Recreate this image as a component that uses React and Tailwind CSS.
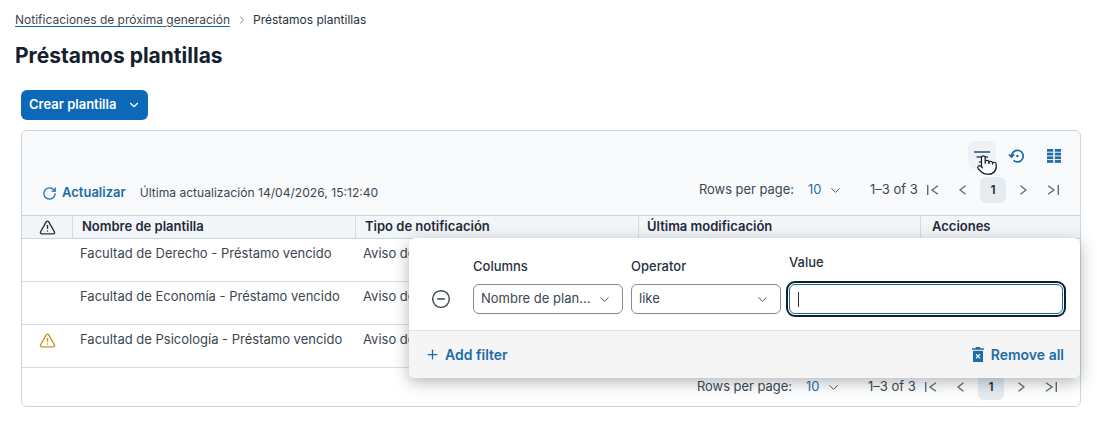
import React from "react";
import { ChevronDown, ChevronRight, RotateCw, TriangleAlert, CircleMinus, Plus, Pointer } from "lucide-react";

const rows = [
  { name: "Facultad de Derecho - Préstamo vencido", warn: false },
  { name: "Facultad de Economía - Préstamo vencido", warn: false },
  { name: "Facultad de Psicología - Préstamo vencido", warn: true },
];

const PagerIcon = ({ d, w = 8 }) => (
  <svg width={w} height="10" viewBox={`0 0 ${w} 10`} fill="none" stroke="#5f6b76" strokeWidth="1.4">
    <path d={d} />
  </svg>
);

const Pagination = () => (
  <div className="flex items-center text-[12.9px] text-[#3b4650]">
    <span className="w-[109px]">Rows per page:</span>
    <span className="text-[#1b6ca8] w-[20px]">10</span>
    <ChevronDown size={15} strokeWidth={1.6} className="text-[#4b5661]" />
    <span className="ml-[27px] w-[50px] whitespace-nowrap text-[13px]">1–3 of 3</span>
    <span className="w-[26px] flex justify-center"><PagerIcon w={12} d="M0.7 0V10M11 0.8L5 5L11 9.2" /></span>
    <span className="w-[34px] flex justify-center"><PagerIcon d="M6.5 0.8L1 5L6.5 9.2" /></span>
    <span className="w-[26px] h-[26px] rounded-md bg-[#e6ebf0] flex items-center justify-center font-semibold text-[12px] text-[#1f2a37]">1</span>
    <span className="w-[34px] flex justify-center"><PagerIcon d="M1.5 0.8L7 5L1.5 9.2" /></span>
    <span className="w-[26px] flex justify-center"><PagerIcon w={12} d="M11.3 0V10M1 0.8L7 5L1 9.2" /></span>
  </div>
);

const HeadCell = ({ className, children }) => (
  <div className={"flex items-center h-full border-r border-[#d5dde4] font-semibold text-[13px] text-[#1f2a37] " + className}>
    {children}
  </div>
);

const SelectBox = ({ className, label }) => (
  <div className={"h-[30px] border border-[#7f8b96] rounded-md flex items-center justify-between pl-[7px] pr-[10px] text-[13px] text-[#3b4650] " + className}>
    <span>{label}</span>
    <ChevronDown size={15} strokeWidth={1.6} className="text-[#4b5661]" />
  </div>
);

const ColumnsIcon = () => (
  <svg width="16" height="16" viewBox="0 0 16 16" fill="#1b6ca8">
    <rect x="1" y="1" width="6.2" height="2.7" />
    <rect x="8.8" y="1" width="6.2" height="2.7" />
    <rect x="1" y="4.7" width="6.2" height="2.7" />
    <rect x="8.8" y="4.7" width="6.2" height="2.7" />
    <rect x="1" y="8.4" width="6.2" height="2.7" />
    <rect x="8.8" y="8.4" width="6.2" height="2.7" />
    <rect x="1" y="12.1" width="6.2" height="2.7" />
    <rect x="8.8" y="12.1" width="6.2" height="2.7" />
  </svg>
);

const RestoreIcon = () => (
  <svg width="18" height="18" viewBox="0 0 18 18" fill="none" stroke="#1b6ca8" strokeWidth="1.7">
    <path d="M3.6 9a5.8 5.8 0 1 1 1.9 4.4" />
    <path d="M1 7.4 L3.6 10 L6.2 7.4" />
    <circle cx="9.4" cy="9" r="1.3" fill="#1b6ca8" stroke="none" />
  </svg>
);

const FilterIcon = () => (
  <svg width="18" height="18" viewBox="0 0 18 18" stroke="#27506f" strokeWidth="1.6" fill="none">
    <path d="M1 6H17M3.5 11H15M6 16H12.5" />
  </svg>
);

const TrashIcon = () => (
  <svg width="12" height="15" viewBox="0 0 12 15" fill="#1b6ca8">
    <path d="M4 0h4l.6 1.2H12v1.6H0V1.2h3.4z" />
    <path d="M1 3.8h10V15H1z" />
    <path d="M4 7.2l4 4M8 7.2l-4 4" stroke="#f5f5f5" strokeWidth="1.3" />
  </svg>
);

export default function App() {
  return (
    <div className="w-[1097px] h-[422px] overflow-hidden bg-white font-['Inter',sans-serif]">
      <div className="pl-[15px] pt-[12px]">
        <div className="flex items-center h-[16px] text-[12px] text-[#3b4650]">
          <span className="underline underline-offset-2 decoration-[#1b6ca8]">Notificaciones de próxima generación</span>
          <ChevronRight size={12} strokeWidth={1.8} className="ml-[6px] mr-[5px] text-[#6b7680]" />
          <span className="text-[#27323d]">Préstamos plantillas</span>
        </div>
        <h1 className="mt-[13px] h-[30px] leading-[30px] text-[21px] font-bold text-[#14202e]">Préstamos plantillas</h1>
      </div>

      <div className="pl-[21px] pt-[19px]">
        <div className="w-[127px] h-[30px] rounded-md bg-[#0b69b7] flex items-center pl-[8px] text-white text-[13px] font-semibold">
          <span>Crear plantilla</span>
          <ChevronDown size={14} strokeWidth={2} className="ml-[11px]" />
        </div>
      </div>

      <div className="relative ml-[21px] mt-[10px] w-[1060px] h-[277px] border border-[#ccd5dd] rounded-md">
        {/* toolbar */}
        <div className="h-[85px] bg-[#f8fafc] rounded-t-md border-b border-[#ccd5dd] relative">
          <div className="flex justify-end items-center h-[28px] absolute right-[18px] top-[10px]">
            <span className="relative w-[28px] h-[28px] rounded-md bg-[#eef2f6] flex items-center justify-center">
              <FilterIcon />
              <Pointer size={22} strokeWidth={1.3} fill="white" className="absolute left-[8px] top-[13px] text-[#111827]" />
            </span>
            <span className="ml-[10px] mt-[2px] w-[22px] flex justify-center"><RestoreIcon /></span>
            <span className="ml-[18px] mt-[2px]"><ColumnsIcon /></span>
          </div>
          <div className="absolute left-0 right-0 top-[46px] flex items-center justify-between pl-[20px] pr-[14px]">
            <div className="flex items-center mt-[6px]">
              <RotateCw size={15} strokeWidth={2} className="text-[#1b6ca8]" />
              <span className="ml-[5px] text-[13px] font-semibold text-[#1b6ca8]">Actualizar</span>
              <span className="ml-[14px] text-[12.1px] text-[#3b4650]">Última actualización 14/04/2026, 15:12:40</span>
            </div>
            <Pagination />
          </div>
        </div>

        {/* table head */}
        <div className="flex h-[23px] bg-[#f3f6f9] border-b border-[#ccd5dd]">
          <HeadCell className="w-[51px] justify-center"><TriangleAlert size={17} strokeWidth={2} className="text-[#27323d]" /></HeadCell>
          <HeadCell className="w-[283px] pl-[9px]">Nombre de plantilla</HeadCell>
          <HeadCell className="w-[283px] pl-[9px]">Tipo de notificación</HeadCell>
          <HeadCell className="w-[282px] pl-[8px]">Última modificación</HeadCell>
          <div className="flex items-center pl-[11px] font-semibold text-[13px] text-[#1f2a37]">Acciones</div>
        </div>

        {/* rows */}
        {rows.map((r) => (
          <div key={r.name} className="flex h-[43px] border-b border-[#d5dde4] text-[13px] text-[#3b4650]">
            <div className="w-[50px] flex justify-center pt-[7px]">
              {r.warn && <TriangleAlert size={17} strokeWidth={2} className="text-[#c8961f]" />}
            </div>
            <div className="w-[283px] pl-[8px] pt-[5px]">{r.name}</div>
            <div className="pl-[8px] pt-[5px] whitespace-nowrap">Aviso de vencimiento</div>
          </div>
        ))}

        {/* footer */}
        <div className="h-[38px] flex items-center justify-end pr-[16px]">
          <Pagination />
        </div>

        {/* filter popup */}
        <div className="absolute left-[387px] top-[107px] w-[671px] h-[140px] bg-white rounded-md shadow-[0_4px_16px_rgba(30,45,60,0.35)]">
          <div className="h-[93px] flex items-end pb-[16px] border-b border-[#dfe3e7]">
            <div className="w-[64px] flex justify-center h-[30px] items-center">
              <CircleMinus size={20} strokeWidth={1.7} className="text-[#3b4650]" />
            </div>
            <div className="w-[158px]">
              <div className="text-[13px] font-medium text-[#27323d] mb-[8px]">Columns</div>
              <SelectBox className="w-[150px]" label="Nombre de plan..." />
            </div>
            <div className="w-[158px]">
              <div className="text-[13px] font-medium text-[#27323d] mb-[8px]">Operator</div>
              <SelectBox className="w-[150px]" label="like" />
            </div>
            <div className="flex-1">
              <div className="text-[13px] font-medium text-[#27323d] mb-[12px]">Value</div>
              <div className="w-[274px] h-[30px] rounded-md border border-[#1b6c8a] outline-2 outline-offset-1 outline-[#0c2233] flex items-center pl-[8px]">
                <span className="w-[1px] h-[15px] bg-[#27323d]" />
              </div>
            </div>
          </div>
          <div className="h-[47px] bg-[#f5f5f5] rounded-b-md flex items-center justify-between pl-[16px] pr-[16px] text-[14px] font-semibold text-[#1b6ca8]">
            <div className="flex items-center">
              <Plus size={15} strokeWidth={2} />
              <span className="ml-[5px]">Add filter</span>
            </div>
            <div className="flex items-center">
              <TrashIcon />
              <span className="ml-[7px]">Remove all</span>
            </div>
          </div>
        </div>
      </div>
    </div>
  );
}
